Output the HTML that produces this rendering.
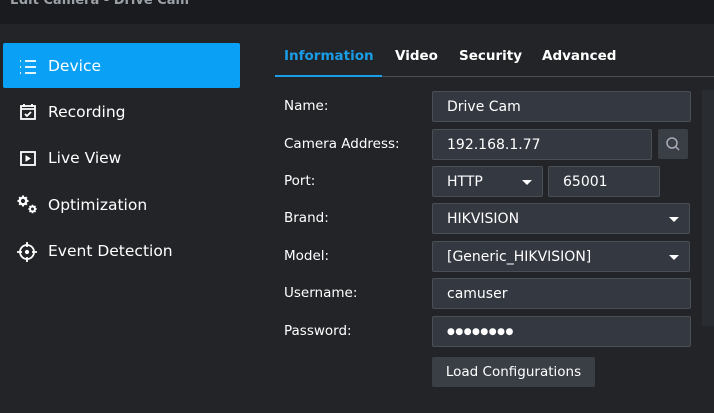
<!DOCTYPE html><html><head><style>
body{margin:0;width:714px;height:413px;background:#222428;font-family:"DejaVu Sans","Liberation Sans",sans-serif;color:#fff;position:relative;overflow:hidden;font-size:14px}
.abs{position:absolute}
.title{left:0;top:0;width:714px;height:24px;background:#191b1e;color:#9aa0a6;font-weight:bold;font-size:13px}
.nav{left:20px;font-size:15.5px;color:#fff}
.inp{position:absolute;background:#343840;border:1px solid #4a4e55;border-radius:2px;box-sizing:border-box;height:31px;padding-left:14px;line-height:31px;font-size:14px;color:#fff}
.lbl{position:absolute;left:284px;font-size:13.5px;color:#fff}
.car{position:absolute;width:0;height:0;border-left:5px solid transparent;border-right:5px solid transparent;border-top:5px solid #fff}
.tab{position:absolute;top:47px;font-weight:bold;font-size:13.5px}
</style></head><body>
<div class="abs title"><span style="position:absolute;left:10px;top:-7px">Edit Camera - Drive Cam</span></div>
<div class="abs" style="left:3px;top:43px;width:237px;height:45px;background:#0aa0f5;border-radius:2px"></div>
<svg class="abs" style="left:18px;top:57px" width="20" height="20" viewBox="0 0 20 20" stroke="#fff" stroke-width="1.8" fill="none"><path d="M2 4h1M2 10h1M2 16h1M7 4h11M7 10h11M7 16h11"/></svg>
<div class="abs nav" style="left:48px;top:57px">Device</div>
<svg class="abs" style="left:19px;top:103px" width="18" height="18" viewBox="0 0 18 18" stroke="#fff" stroke-width="1.8" fill="none"><rect x="2" y="3" width="14" height="13"/><path d="M2 6h14M5 1v3M13 1v3M6 11l2 2 4-4"/></svg>
<div class="abs nav" style="left:48px;top:103px">Recording</div>
<svg class="abs" style="left:19px;top:149px" width="18" height="18" viewBox="0 0 18 18" stroke="#fff" stroke-width="1.8" fill="none"><rect x="2" y="3" width="14" height="13"/><path d="M7 7v5l4-2.5z" fill="#fff" stroke-width="1"/></svg>
<div class="abs nav" style="left:48px;top:149px">Live View</div>
<svg class="abs" style="left:17px;top:194px" width="22" height="22" viewBox="0 0 22 22" fill="none" stroke="#fff">
<circle cx="6" cy="7" r="3.3" stroke-width="2.4"/><path d="M6 1.5v2M6 10.5v2M0.5 7h2M9.5 7h2M2.2 3.2l1.4 1.4M8.4 9.4l1.4 1.4M2.2 10.8l1.4-1.4M8.4 4.6l1.4-1.4" stroke-width="2"/>
<circle cx="15.5" cy="15" r="2.5" stroke-width="2"/><path d="M15.5 10.8v1.6M15.5 17.6v1.6M11.3 15h1.6M18.1 15h1.6M12.5 12l1.1 1.1M17.4 16.9l1.1 1.1M12.5 18l1.1-1.1M17.4 13.1l1.1-1.1" stroke-width="1.6"/></svg>
<div class="abs nav" style="left:48px;top:196px">Optimization</div>
<svg class="abs" style="left:16px;top:241px" width="22" height="22" viewBox="0 0 22 22" fill="none" stroke="#fff" stroke-width="1.8"><circle cx="11" cy="11" r="7"/><path d="M11 1v5M11 16v5M1 11h5M16 11h5"/><circle cx="11" cy="11" r="1.2" fill="#fff"/></svg>
<div class="abs nav" style="left:48px;top:242px">Event Detection</div>

<div class="tab" style="left:284px;top:48px;color:#1a9de6">Information</div>
<div class="tab" style="left:395px;top:48px">Video</div>
<div class="tab" style="left:459px;top:48px">Security</div>
<div class="tab" style="left:542px;top:48px">Advanced</div>
<div class="abs" style="left:275px;top:76px;width:439px;height:1px;background:#4a4e55"></div>
<div class="abs" style="left:275px;top:75px;width:107px;height:2px;background:#1a9de6"></div>
<div class="abs" style="left:702px;top:90px;width:12px;height:236px;background:#292c31"></div>

<div class="lbl" style="top:98px">Name:</div><div class="inp" style="left:432px;top:91px;width:259px">Drive Cam</div>
<div class="lbl" style="top:136px">Camera Address:</div><div class="inp" style="left:432px;top:129px;width:220px">192.168.1.77</div>
<div class="abs" style="left:658px;top:129px;width:30px;height:30px;background:#3a3e45;border-radius:2px"></div>
<svg class="abs" style="left:665px;top:136px" width="16" height="16" viewBox="0 0 16 16" fill="none" stroke="#aab" stroke-width="1.5"><circle cx="7" cy="7" r="5"/><path d="M11 11l3 3"/></svg>
<div class="lbl" style="top:173px">Port:</div><div class="inp" style="left:432px;top:166px;width:111px">HTTP</div><div class="car" style="left:522px;top:180px"></div>
<div class="inp" style="left:548px;top:166px;width:112px">65001</div>
<div class="lbl" style="top:210px">Brand:</div><div class="inp" style="left:432px;top:203px;width:258px">HIKVISION</div><div class="car" style="left:669px;top:217px"></div>
<div class="lbl" style="top:248px">Model:</div><div class="inp" style="left:432px;top:241px;width:258px">[Generic_HIKVISION]</div><div class="car" style="left:669px;top:255px"></div>
<div class="lbl" style="top:285px">Username:</div><div class="inp" style="left:432px;top:278px;width:259px">camuser</div>
<div class="lbl" style="top:323px">Password:</div><div class="inp" style="left:432px;top:316px;width:259px;font-size:9px;letter-spacing:0.5px">●●●●●●●●</div>
<div class="abs" style="left:432px;top:357px;width:163px;height:30px;background:#3a3e45;border-radius:2px;text-align:center;line-height:31px;font-size:13.5px">Load Configurations</div>
</body></html>
